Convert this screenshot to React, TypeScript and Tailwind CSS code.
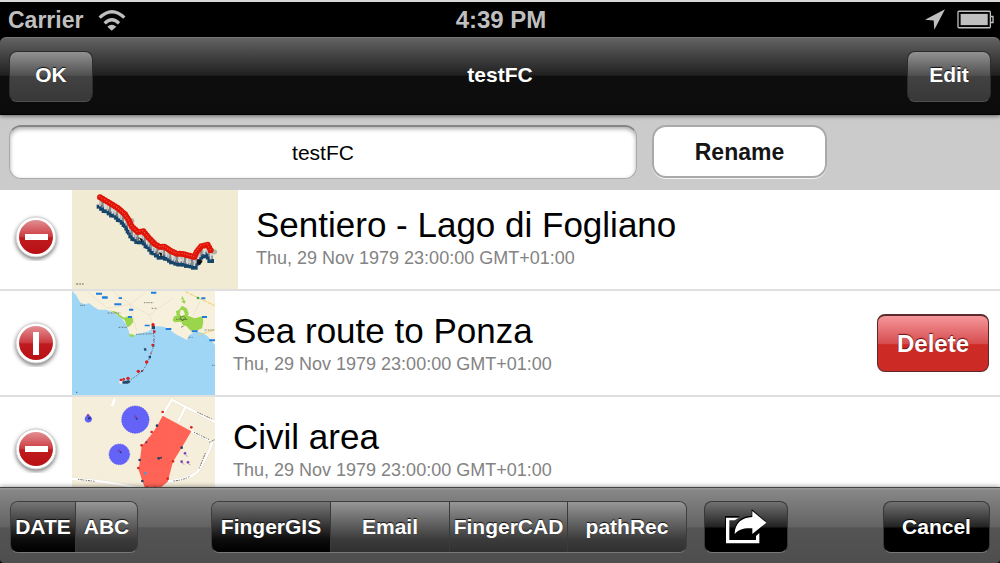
import { useState } from 'react';
import type { ReactNode } from 'react';

interface Track {
  id: string;
  title: string;
  date: string;
  thumb: ReactNode;
}

type Point = [number, number];

const TRAIL: Point[] = [
  [300, 40], [330, 58], [352, 71], [375, 91], [387, 110], [395, 127], [413, 144], [430, 142],
  [446, 161], [464, 180], [480, 189], [493, 188], [511, 200], [530, 209], [548, 210], [583, 219],
  [590, 204], [604, 187], [623, 182], [632, 199],
];

// evenly spaced pins along the trail
function spread(line: Point[], step: number): Point[] {
  const out: Point[] = [];
  for (let i = 1; i < line.length; i++) {
    const [x0, y0] = line[i - 1];
    const [x1, y1] = line[i];
    const n = Math.max(1, Math.round(Math.hypot(x1 - x0, y1 - y0) / step));
    for (let k = 0; k < n; k++) out.push([x0 + ((x1 - x0) * k) / n, y0 + ((y1 - y0) * k) / n]);
  }
  out.push(line[line.length - 1]);
  return out;
}

function TrailThumb() {
  const pins = spread(TRAIL, 8);
  return (
    <svg viewBox="216 3 498 312" className="w-[166px] h-[104px] shrink-0" aria-hidden="true">
      <rect x="216" y="3" width="498" height="312" fill="#f1ebd3" />
      <g fill="#777" opacity="0.5">
        {pins.map(([x, y], i) => i % 4 === 0 && <ellipse key={i} cx={x + 13} cy={y + 13} rx="11" ry="8" />)}
      </g>
      {pins.map(([x, y], i) => (
        <rect key={i} x={x - 10} y={y + 22 + (i % 3) * 2} width="20" height="12" fill="#174469" />
      ))}
      {pins.map(([x, y], i) => (
        <rect key={i} x={x - 3} y={y + 5} width="6" height="22" fill={['#c2c2c2', '#858585', '#d8d8d8'][i % 3]} />
      ))}
      <path d="M416 160l12 6-3 8zM476 205l10 2-2 14zM592 226l16 4-8 14-8-4z" fill="#111" />
      {pins.map(([x, y], i) => <circle key={i} cx={x} cy={y} r="9" fill="#df1507" />)}
      {pins.map(([x, y], i) => <circle key={i} cx={x - 2} cy={y - 2} r="2" fill="#ff5548" />)}
      <path d="M228 300h7m3 0h5m3 0h5" stroke="#99937f" strokeWidth="4" />
    </svg>
  );
}

function SeaThumb() {
  return (
    <svg viewBox="216 18 429 312" className="w-[143px] h-[104px] shrink-0" aria-hidden="true">
      <rect x="216" y="18" width="429" height="312" fill="#9fd5f5" />
      <path
        d="M216 18L228 30 240 52 252 58 268 55 282 66 296 74 318 74 338 82 352 91 366 101 377 116 385 134 390 150 398 154 410 147 428 143 446 139 458 128 472 124 492 125 510 135 530 149 548 158 560 165 568 150 580 144 596 141 610 145 624 155 645 180V18Z"
        fill="#f6f0dc"
      />
      <path d="M330 76l18 4 12 10 12 8 14-5 12 6 2 12-10 12-8 4-8-22-14-8-14-12zM385 149l12-2 8 6-10 4z" fill="#9ad54b" />
      <path d="M546 62l14 8 6 14-2 8 20 8 24-6 2 18-4 18-18 8-18-2-10-12-12-4-4-10-20 2-6-6 4-12 8-2-2-14 8-2z" fill="#9ad54b" />
      <path d="M543 48h6v-8l8 10-4 6zM546 32l6 10-8 2z" fill="#9ad54b" />
      <path d="M542 74l8 2 5 12-10 8-6-10z" fill="#f6f0dc" />
      <g fill="none" stroke="#e9dfc3" strokeWidth="2">
        <path d="M262 20l60 50 68-12 58 32 70-50M390 58l20 80M448 90l14 38M340 20l50 38 46-36M600 50l-20 42" />
      </g>
      <path d="M556 20l88 42M596 150l48-16" stroke="#f1cb5b" strokeWidth="3" fill="none" strokeDasharray="12 3" />
      <g fill="#1f7de0">
        <path d="M288 23h18v6h-18zM306 34h17v7h-17zM356 37h10v5h-10zM343 55h21v6h-21zM387 71h13v6h-13zM384 93h12v6h-12zM453 20h16v6h-16zM434 119h15v5h-15zM497 129h17v6h-17zM575 136h18v6h-18zM604 37h12v6h-12zM606 93h15v6h-15zM628 163h17v6h-17z" />
      </g>
      <g stroke="#4a4a46" strokeWidth="2" strokeDasharray="4 2 2 2" fill="none">
        <path d="M432 53h28M356 127h26M528 103h34M455 70h14M241 61h14M323 84h38M614 135h28M566 157h12M636 241h9M408 148l56-2" />
      </g>
      <path d="M540 97l10-4 8 8-12 6zM543 127l8-4" stroke="#2f5b20" strokeWidth="2" fill="none" />
      <circle cx="594" cy="39" r="4" fill="#2fae64" />
      <path d="M461 124v16l2 28-5 24-9 26-8 18-12 20-16 14-18 12-18 8-18-2" fill="none" stroke="#44505e" strokeWidth="2" strokeDasharray="5 4" />
      <path d="M431 190h8v7h-6zM455 122h10v10h-10zM446 212h7v8h-7zM457 178h6v7h-6zM364 290l22-4 6 4-8 6h-16zM423 256h5v5h-5z" fill="#26486d" />
      <g fill="#dd1b1b">
        <circle cx="459" cy="119" r="5" /><circle cx="463" cy="140" r="4" /><circle cx="458" cy="180" r="4" />
        <circle cx="440" cy="231" r="5" /><circle cx="415" cy="259" r="5" /><circle cx="384" cy="280" r="5" />
        <circle cx="371" cy="283" r="4" /><circle cx="363" cy="285" r="4" /><circle cx="453" cy="204" r="2" />
        <circle cx="461" cy="166" r="2" /><circle cx="428" cy="257" r="2" />
      </g>
      <path d="M357 288h10v8h-8z" fill="#eee" />
      <path d="M228 322h4" stroke="#557" strokeWidth="3" />
    </svg>
  );
}

function CivilThumb() {
  return (
    <svg viewBox="216 18 429 312" className="w-[143px] h-[104px] shrink-0" aria-hidden="true">
      <rect x="216" y="18" width="429" height="312" fill="#f5eedb" />
      <g fill="none" stroke="#e4dcc6" strokeWidth="9">
        <path d="M518 22l-32 52M516 26l130 68M556 48l-22 46M574 120l66 34M638 152q-20 54-44 88-16 22-92 32M216 264q110 6 200 28" />
      </g>
      <g fill="none" stroke="#fff" strokeWidth="7">
        <path d="M344 22l-8 24M518 22l-32 52M516 26l130 68M556 48l-22 46M574 120l66 34M638 152q-20 54-44 88-16 22-92 32M216 264q110 6 200 28" />
      </g>
      <g fill="none" stroke="#77736a" strokeWidth="3" strokeDasharray="4 3 7 2 3 4">
        <path d="M592 64l44 20M582 124l46 22M616 186l-18 46M520 270q28-2 50-14M234 265l50 6M628 154l16-8M333 290h8" />
      </g>
      <g fill="#6363f7" stroke="#4848f5" strokeWidth="2" strokeDasharray="4 3">
        <circle cx="406" cy="86" r="41" />
        <circle cx="358" cy="190" r="31" />
        <circle cx="265" cy="84" r="10" />
      </g>
      <path d="M488 74L574 121 545 170 519 212 511 242 503 272 482 290 436 294 427 270 416 236 420 206 425 166 455 130 472 104Z" fill="#ff6356" />
      <path d="M511 86v154M416 240h94" stroke="#f07467" strokeWidth="1" />
      <g fill="#d9231e">
        <circle cx="488" cy="63" r="4" /><circle cx="574" cy="109" r="4" /><circle cx="455" cy="123" r="4" />
        <circle cx="425" cy="163" r="4" /><circle cx="519" cy="211" r="4" /><circle cx="415" cy="231" r="4" />
        <circle cx="503" cy="263" r="4" /><circle cx="441" cy="290" r="4" /><circle cx="466" cy="290" r="4" />
      </g>
      <g fill="#233d66">
        <circle cx="471" cy="104" r="4" /><circle cx="439" cy="154" r="3" /><circle cx="419" cy="207" r="4" />
        <circle cx="427" cy="270" r="4" /><circle cx="545" cy="170" r="4" /><circle cx="476" cy="202" r="4" />
        <circle cx="483" cy="200" r="3" /><circle cx="410" cy="83" r="3" /><circle cx="362" cy="184" r="3" />
        <circle cx="268" cy="82" r="4" />
      </g>
      <g fill="#8040b8">
        <circle cx="406" cy="77" r="4" /><circle cx="357" cy="179" r="4" /><circle cx="264" cy="73" r="4" />
        <circle cx="555" cy="187" r="4" /><circle cx="545" cy="212" r="4" /><circle cx="564" cy="214" r="4" />
      </g>
      <path d="M557 193l6 3M547 217l6 3M566 219l5 3" stroke="#888" strokeWidth="2" />
      <circle cx="436" cy="247" r="4" fill="#4b9cd3" />
    </svg>
  );
}

const TRACKS: Track[] = [
  { id: 'fogliano', title: 'Sentiero - Lago di Fogliano', date: 'Thu, 29 Nov 1979 23:00:00 GMT+01:00', thumb: <TrailThumb /> },
  { id: 'ponza', title: 'Sea route to Ponza', date: 'Thu, 29 Nov 1979 23:00:00 GMT+01:00', thumb: <SeaThumb /> },
  { id: 'civil', title: 'Civil area', date: 'Thu, 29 Nov 1979 23:00:00 GMT+01:00', thumb: <CivilThumb /> },
];

const SORTS = [
  { label: 'DATE', width: 'w-[65px]' },
  { label: 'ABC', width: 'w-[61px]' },
];

const TARGETS = [
  { label: 'FingerGIS', width: 'w-[119px]' },
  { label: 'Email', width: 'w-[119px]' },
  { label: 'FingerCAD', width: 'w-[118px]' },
  { label: 'pathRec', width: 'w-[118px]' },
];

const navButton =
  'w-[84px] h-[51px] pb-[2px] rounded-lg border border-[#2c2c2c] border-b-[#505050] text-[21px] leading-6 font-bold text-white [text-shadow:0_-1px_1px_#111] bg-[linear-gradient(#929292,#505050_48%,#424242_50%,#383838)]';

const darkButton =
  'h-[52px] rounded-lg border border-[#383838] border-b-[#777] text-[21px] leading-6 font-bold text-white [text-shadow:0_-1px_1px_#000] bg-[linear-gradient(#727272,#222_50%,#000_52%,#000)]';

function StatusBar() {
  return (
    <div className="h-[37px] pl-2 pr-[6px] border-t-2 border-[#d8d8d8] bg-black grid grid-cols-3 items-center text-[#bfbfbf] font-bold leading-7">
      <div className="flex items-center gap-[14px]">
        <span className="text-[23px]">Carrier</span>
        <svg viewBox="289 24 90 66" className="w-[30px] h-[22px]" aria-hidden="true">
          <path d="M297 50Q334 14 371 50M312 67Q334 46 355 67" fill="none" stroke="#bfbfbf" strokeWidth="10" />
          <path d="M320 77Q333 65 347 77L333 89Z" fill="#bfbfbf" />
        </svg>
      </div>
      <span className="text-center text-[24px]">4:39 PM</span>
      <div className="flex items-center justify-end gap-3">
        <svg viewBox="676 26 60 62" className="w-5 h-[21px]" aria-hidden="true">
          <path d="M736 26L704 88 702 60 676 58Z" fill="#bfbfbf" />
        </svg>
        <svg viewBox="771 28 112 56" className="w-[37px] h-[19px]" aria-hidden="true">
          <rect x="774" y="31" width="98" height="50" rx="3" fill="none" stroke="#bfbfbf" strokeWidth="4" />
          <rect x="782" y="39" width="82" height="34" fill="#bfbfbf" />
          <path d="M873 47h7v18h-7" fill="none" stroke="#bfbfbf" strokeWidth="4" />
        </svg>
      </div>
    </div>
  );
}

function RemoveToggle({ open, title, onClick }: { open: boolean; title: string; onClick: () => void }) {
  return (
    <button aria-label={`Remove ${title}`} aria-expanded={open} onClick={onClick} className="w-12 h-12 shrink-0">
      <svg viewBox="0 0 48 48" className="w-12 h-12">
        <defs>
          <linearGradient id="red" x1="0" y1="0" x2="0" y2="1">
            <stop offset="0" stopColor="#e28f93" />
            <stop offset="0.5" stopColor="#cb3a3f" />
            <stop offset="0.52" stopColor="#bf1c20" />
            <stop offset="1" stopColor="#b80f14" />
          </linearGradient>
        </defs>
        <circle cx="24" cy="24" r="20" className="fill-white stroke-[#cfcfcf] drop-shadow-[0_2px_2px_#00000088]" />
        <circle cx="24" cy="24" r="17" fill="url(#red)" />
        {open ? (
          <rect x="21" y="13" width="6" height="23" fill="#fff" />
        ) : (
          <rect x="13" y="21" width="23" height="6" fill="#fff" />
        )}
      </svg>
    </button>
  );
}

function Segments({ items, active, onSelect }: {
  items: { label: string; width: string }[];
  active: string;
  onSelect: (label: string) => void;
}) {
  return (
    <div className="flex h-[52px] rounded-lg overflow-hidden border border-[#3e3e3e] border-b-[#777] divide-x divide-[#3a3a3a]">
      {items.map(({ label, width }) => (
        <button
          key={label}
          aria-pressed={label === active}
          onClick={() => onSelect(label)}
          className={`${width} text-center text-[21px] leading-6 font-bold text-white [text-shadow:0_-1px_1px_#111] ${
            label === active
              ? 'bg-[linear-gradient(#767676,#383838_45%,#0c0c0c_75%,#000)]'
              : 'bg-[linear-gradient(#979797,#5f5f5f_45%,#3b3b3b_75%,#303030)]'
          }`}
        >
          {label}
        </button>
      ))}
    </div>
  );
}

export default function App() {
  const [name, setName] = useState('testFC');
  const [openId, setOpenId] = useState<string | null>('ponza');
  const [sort, setSort] = useState('DATE');
  const [target, setTarget] = useState('FingerGIS');

  return (
    <div className="h-screen flex flex-col overflow-hidden bg-black font-['Liberation_Sans',Arial,sans-serif]">
      <StatusBar />

      <header className="relative z-20 h-[78px] shrink-0 px-[9px] rounded-t-md border-t border-[#777] border-b border-b-black flex items-center justify-between bg-[linear-gradient(#626262,#202020_49%,#0e0e0e_50%,#0b0b0b)] shadow-[0_1px_4px_#00000088]">
        <button className={navButton}>OK</button>
        <h1 className="pb-[2px] text-[21px] leading-6 font-bold text-white">testFC</h1>
        <button className={navButton}>Edit</button>
      </header>

      <form
        className="relative z-10 h-[75px] shrink-0 pl-[9px] pr-[173px] pt-[10px] flex gap-[15px] bg-[#cbcbcb]"
        onSubmit={(e) => e.preventDefault()}
      >
        <input
          type="text"
          aria-label="Name"
          value={name}
          onChange={(e) => setName(e.target.value)}
          className="flex-1 min-w-0 h-[54px] rounded-xl border border-[#a9a9a9] border-t-2 border-t-[#858585] bg-white text-center text-[21px] leading-6 text-black shadow-[inset_0_2px_4px_#00000055]"
        />
        <button className="w-[175px] h-[53px] rounded-[14px] border-2 border-[#a9a9a9] bg-white text-[23px] leading-7 font-bold text-[#151515] shadow-[0_1px_0_#f4f4f4]">
          Rename
        </button>
      </form>

      {/* the list is scrolled a little way under the form */}
      <ul className="-mt-[5px] flex-1 min-h-0 overflow-hidden bg-white">
        {TRACKS.map((track) => (
          <li key={track.id} className="h-[106px] pl-3 pr-[11px] flex items-center border-b-2 border-[#e0e0e0]">
            <RemoveToggle
              open={openId === track.id}
              title={track.title}
              onClick={() => setOpenId(openId === track.id ? null : track.id)}
            />
            <div className="ml-3">{track.thumb}</div>
            <div className="ml-[18px] flex-1 min-w-0">
              <h2 className="text-[35px] leading-[42px] text-black whitespace-nowrap">{track.title}</h2>
              <p className="text-[18px] leading-6 text-[#838383] whitespace-nowrap">{track.date}</p>
            </div>
            {openId === track.id && (
              <button className="w-[112px] h-[58px] rounded-lg border border-[#5c2a2c] border-t-2 bg-[linear-gradient(#f5979b,#d64c4e_51%,#cc2b26_52%,#cb2a25)] text-[24px] leading-7 font-bold text-white [text-shadow:0_-1px_1px_#601010]">
                Delete
              </button>
            )}
          </li>
        ))}
      </ul>

      <footer className="relative z-10 h-[76px] shrink-0 pt-[2px] px-[10px] rounded-b-[4px] border-t border-[#444] flex items-center bg-[linear-gradient(#9c9c9c,#878787_3%,#636363_52%,#545454_53%,#4e4e4e)] shadow-[0_-1px_4px_#00000055]">
        <Segments items={SORTS} active={sort} onSelect={setSort} />
        <div className="ml-[73px]">
          <Segments items={TARGETS} active={target} onSelect={setTarget} />
        </div>
        <button aria-label="Share" className={`${darkButton} w-[84px] ml-[17px] flex items-center justify-center`}>
          <svg viewBox="144 78 126 105" className="w-[42px] h-[35px]" aria-hidden="true">
            <path d="M188 99H144V177H246V146L236 155V168H155V108H177Z" fill="#000" />
            <path d="M224 78L266 115 224 150V132C200 130 183 136 171 150C171 118 193 99 224 98Z" fill="#000" />
            <path d="M185 104H147V181H247V150L237 159V171H157V112H173Z" fill="#fff" />
            <path d="M226 84L268 119 226 153V136C201 134 184 140 173 153C173 121 195 103 226 102Z" fill="#fff" />
          </svg>
        </button>
        <button className={`${darkButton} w-[107px] ml-auto`}>Cancel</button>
      </footer>
    </div>
  );
}
